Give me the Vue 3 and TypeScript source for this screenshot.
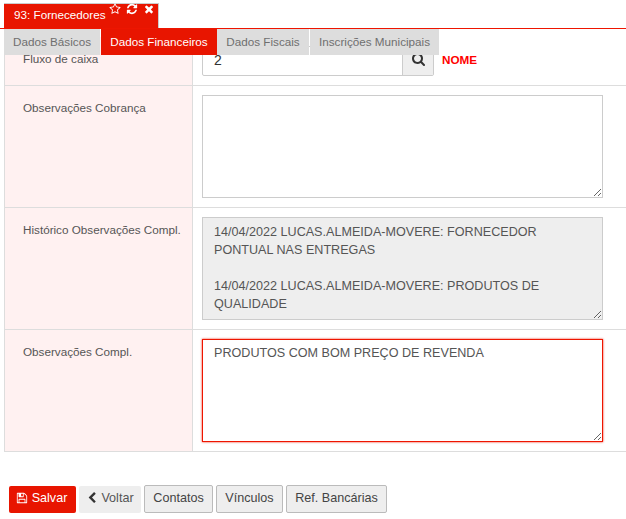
<script setup lang="ts">
const subTabs = [
  { label: 'Dados Básicos', width: 96, active: false },
  { label: 'Dados Financeiros', width: 116, active: true },
  { label: 'Dados Fiscais', width: 92, active: false },
  { label: 'Inscrições Municipais', width: 129, active: false },
]
const historico = `14/04/2022 LUCAS.ALMEIDA-MOVERE: FORNECEDOR PONTUAL NAS ENTREGAS

14/04/2022 LUCAS.ALMEIDA-MOVERE: PRODUTOS DE QUALIDADE`
const compl = 'PRODUTOS COM BOM PREÇO DE REVENDA'
</script>

<template>
  <div class="page">
    <header class="top">
      <div class="main-tab">
        <span class="main-title">93: Fornecedores</span>
        <svg class="ti star" viewBox="0 0 1792 1792"><path d="M1201 1004l306-297-422-62-189-382-189 382-422 62 306 297-73 421 378-199 377 199zm527-357q0 22-26 48l-363 354 86 500q1 7 1 20 0 50-41 50-19 0-40-12l-449-236-449 236q-22 12-40 12-21 0-31.5-14.5t-10.5-35.5q0-6 2-20l86-500-364-354q-25-27-25-48 0-37 56-46l502-73 225-455q19-41 49-41t49 41l225 455 502 73q56 9 56 46z"/></svg>
        <svg class="ti" viewBox="0 0 1792 1792"><path d="M1639 1056q0 5-1 7-64 268-268 434.5t-478 166.5q-146 0-282.5-55t-243.5-157l-129 129q-19 19-45 19t-45-19-19-45v-448q0-26 19-45t45-19h448q26 0 45 19t19 45-19 45l-137 137q71 66 161 102t187 36q134 0 250-65t186-179q11-17 53-117 8-23 30-23h192q13 0 22.5 9.5t9.5 22.5zm25-800v448q0 26-19 45t-45 19h-448q-26 0-45-19t-19-45 19-45l138-138q-148-137-349-137-134 0-250 65t-186 179q-11 17-53 117-8 23-30 23h-199q-13 0-22.5-9.5t-9.5-22.5v-7q65-268 270-434.5t480-166.5q146 0 284 55.5t245 156.5l130-129q19-19 45-19t45 19 19 45z"/></svg>
        <svg class="ti" viewBox="0 0 1792 1792"><path d="M1490 1322q0 40-28 68l-136 136q-28 28-68 28t-68-28l-294-294-294 294q-28 28-68 28t-68-28l-136-136q-28-28-28-68t28-68l294-294-294-294q-28-28-28-68t28-68l136-136q28-28 68-28t68 28l294 294 294-294q28-28 68-28t68 28l136 136q28 28 28 68t-28 68l-294 294 294 294q28 28 28 68z"/></svg>
      </div>
    </header>

    <nav class="subtabs">
      <span
        v-for="t in subTabs"
        :key="t.label"
        class="subtab"
        :class="{ active: t.active }"
        :style="{ width: t.width + 'px' }"
      >{{ t.label }}</span>
    </nav>

    <section class="form">
      <div class="row row-first">
        <div class="label">Fluxo de caixa</div>
        <div class="field field-first">
          <div class="input-group">
            <span class="input">2</span>
            <span class="addon">
              <svg class="search" viewBox="0 0 1792 1792"><path d="M1152 704q0-185-131.5-316.5t-316.5-131.5-316.5 131.5-131.5 316.5 131.5 316.5 316.5 131.5 316.5-131.5 131.5-316.5zm512 832q0 52-38 90t-90 38q-54 0-90-38l-343-342q-179 124-399 124-143 0-273.5-55.5t-225-150-150-225-55.5-273.5 55.5-273.5 150-225 225-150 273.5-55.5 273.5 55.5 225 150 150 225 55.5 273.5q0 220-124 399l343 343q37 37 37 90z"/></svg>
            </span>
          </div>
          <span class="nome">NOME</span>
        </div>
      </div>

      <div class="row">
        <div class="label">Observações Cobrança</div>
        <div class="field"><textarea class="ta"></textarea></div>
      </div>

      <div class="row">
        <div class="label">Histórico Observações Compl.</div>
        <div class="field"><textarea class="ta readonly" readonly :value="historico"></textarea></div>
      </div>

      <div class="row">
        <div class="label">Observações Compl.</div>
        <div class="field"><textarea class="ta focus" :value="compl"></textarea></div>
      </div>
    </section>

    <footer class="actions">
      <button class="btn save">
        <svg class="bi" viewBox="0 0 1792 1792"><path d="M512 1536h768v-384h-768v384zm896 0h128v-896q0-14-10-38.5t-20-34.5l-281-281q-10-10-34-20t-39-10v416q0 40-28 68t-68 28h-576q-40 0-68-28t-28-68v-416h-128v1280h128v-416q0-40 28-68t68-28h832q40 0 68 28t28 68v416zm-384-928v-320q0-13-9.5-22.5t-22.5-9.5h-192q-13 0-22.5 9.5t-9.5 22.5v320q0 13 9.5 22.5t22.5 9.5h192q13 0 22.5-9.5t9.5-22.5zm640 32v928q0 40-28 68t-68 28h-1344q-40 0-68-28t-28-68v-1344q0-40 28-68t68-28h928q40 0 88 20t76 48l280 280q28 28 48 76t20 88z"/></svg>
        Salvar
      </button>
      <button class="btn back">
        <svg class="bi" viewBox="0 0 1792 1792"><path d="M1427 301l-531 531 531 531q19 19 19 45t-19 45l-166 166q-19 19-45 19t-45-19l-742-742q-19-19-19-45t19-45l742-742q19-19 45-19t45 19l166 166q19 19 19 45t-19 45z"/></svg>
        Voltar
      </button>
      <button class="btn plain w69">Contatos</button>
      <button class="btn plain w67">Vínculos</button>
      <button class="btn plain w101">Ref. Bancárias</button>
    </footer>
  </div>
</template>

<style>
html, body { margin: 0; background: #fff; overflow: hidden; }
</style>

<style scoped>
.page {
  width: 626px;
  height: 519px;
  font-family: "Liberation Sans", Arial, sans-serif;
  color: #555;
  display: flex;
  flex-direction: column;
}
.top {
  height: 28px;
  border-bottom: 1px solid #ee1500;
  padding-left: 4px;
  display: flex;
  align-items: flex-end;
}
.main-tab {
  width: 155px;
  height: 25px;
  box-sizing: border-box;
  background: #e81500;
  border-top: 1px solid #ccc;
  border-right: 1px solid #ccc;
  color: #fff;
  display: flex;
  align-items: flex-start;
  padding-left: 10px;
}
.main-title {
  font-size: 11.7px;
  line-height: 14px;
  margin-top: 4px;
  margin-right: 3px;
  white-space: nowrap;
  flex: none;
}
.ti {
  width: 12px;
  height: 12px;
  fill: #fff;
  margin-top: -1px;
  margin-right: 5px;
  flex: none;
}
.ti:last-child {
  margin-right: 0;
}
.subtabs {
  display: flex;
  padding-left: 4px;
  height: 26px;
  position: relative;
  z-index: 1;
}
.subtab {
  background: #ddd;
  color: #6f6f6f;
  font-size: 11.7px;
  line-height: 26px;
  text-align: center;
  flex: none;
  margin-right: 1px;
}
.subtab.active {
  background: #e81500;
  color: #fff;
  margin-right: 0;
}
.form {
  margin-left: 4px;
  flex: none;
  border-bottom: 1px solid #ddd;
}
.row {
  display: flex;
  height: 122px;
  box-sizing: border-box;
  border-top: 1px solid #ddd;
}
.row-first {
  height: 48px;
  margin-top: -18px;
  border-top: none;
}
.label {
  width: 189px;
  flex: none;
  box-sizing: border-box;
  background: #fff1f1;
  border-left: 1px solid #ddd;
  border-right: 1px solid #ddd;
  padding: 15px 0 0 18px;
  font-size: 11.7px;
  line-height: 14px;
  color: #555;
}
.field {
  flex: 1;
  padding: 9px 0 0 9px;
}
.field-first {
  display: flex;
  align-items: flex-start;
}
.input-group {
  display: flex;
  width: 232px;
  height: 30px;
  box-sizing: border-box;
  border: 1px solid #ccc;
  border-radius: 2px;
}
.input {
  flex: 1;
  font-size: 14px;
  line-height: 28px;
  padding-left: 11px;
  margin-top: -1px;
  color: #333;
}
.addon {
  width: 30px;
  background: #eee;
  border-left: 1px solid #ccc;
  display: flex;
  justify-content: center;
  align-items: center;
}
.search {
  width: 14px;
  height: 14px;
  fill: #333;
  margin-top: -2px;
  margin-left: 1px;
}
.nome {
  color: #f00;
  font-size: 11.7px;
  font-weight: bold;
  line-height: 28px;
  margin-left: 8px;
}
.ta {
  display: block;
  width: 401px;
  height: 103px;
  box-sizing: border-box;
  border: 1px solid #ccc;
  border-radius: 0;
  padding: 5px 11px;
  font-family: inherit;
  font-size: 12.6px;
  line-height: 18px;
  color: #555;
  background: #fff;
  outline: none;
  margin: 0;
}
.readonly {
  background: #eee;
}
.focus {
  border-color: #ee1500;
  box-shadow: 0 0 2px rgba(238, 21, 0, 0.9);
  padding-top: 4px;
}
.actions {
  display: flex;
  align-items: flex-end;
  padding-left: 9px;
  gap: 3px;
  margin-top: 33px;
}
.btn {
  height: 27px;
  font-family: inherit;
  font-size: 12.6px;
  line-height: 16px;
  padding: 0 0 3px;
  border-radius: 2px;
  border: none;
  display: inline-flex;
  align-items: center;
  justify-content: center;
  flex: none;
  box-sizing: border-box;
}
.bi {
  width: 12px;
  height: 12px;
  margin-right: 4px;
}
.save {
  width: 67px;
  padding-right: 2px;
  background: #e81500;
  color: #fff;
}
.save .bi { fill: #fff; }
.back {
  width: 62px;
  background: #eee;
  color: #555;
}
.back .bi { fill: #333; margin-right: 3px; }
.plain {
  height: 28px;
  background: #eee;
  border: 1px solid #bbb;
  color: #444;
}
.w69 { width: 69px; }
.w67 { width: 67px; }
.w101 { width: 101px; }
</style>
